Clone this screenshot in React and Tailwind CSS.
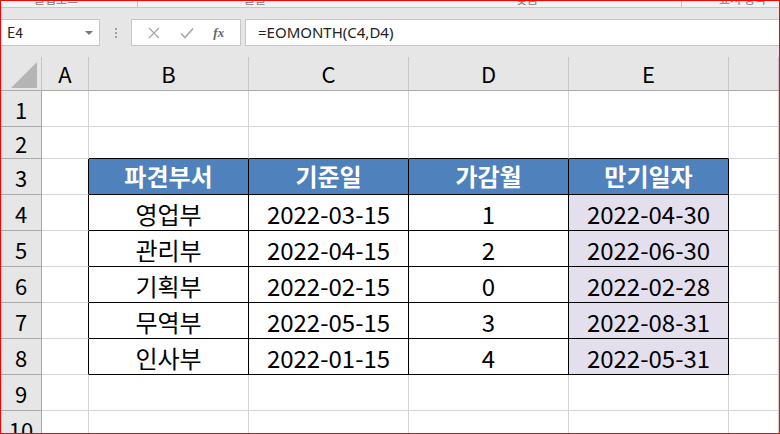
import React from 'react'

const FONT = { fontFamily: '"Noto Sans CJK KR", "Noto Sans", sans-serif' }

const ROW_H = [
  'h-[36px] grid-rows-[36px]', 'h-[32px] grid-rows-[32px]', 'h-[36px] grid-rows-[36px]', 'h-[36px] grid-rows-[36px]',
  'h-[36px] grid-rows-[36px]', 'h-[36px] grid-rows-[36px]', 'h-[36px] grid-rows-[36px]', 'h-[36px] grid-rows-[36px]',
  'h-[36px] grid-rows-[36px]', 'h-[36px] grid-rows-[36px]',
]

const DATA = {
  3: ['파견부서', '기준일', '가감월', '만기일자'],
  4: ['영업부', '2022-03-15', '1', '2022-04-30'],
  5: ['관리부', '2022-04-15', '2', '2022-06-30'],
  6: ['기획부', '2022-02-15', '0', '2022-02-28'],
  7: ['무역부', '2022-05-15', '3', '2022-08-31'],
  8: ['인사부', '2022-01-15', '4', '2022-05-31'],
}

function Cell({ row, col }) {
  const inTable = row >= 3 && row <= 8
  // col: 0 = A, 1..4 = B..E, 5 = F
  if (col >= 1 && col <= 4 && inTable) {
    const text = DATA[row][col - 1]
    if (row === 3) {
      return (
        <div className="min-h-0 overflow-hidden border-r border-b border-[#000] bg-[#4f81bd] text-white font-bold text-[24px] leading-none flex items-center justify-center pb-[2px]">
          {text}
        </div>
      )
    }
    return (
      <div className={`min-h-0 overflow-hidden border-r border-b border-[#000] text-[24px] leading-none text-black flex items-center justify-center pt-[2px] ${col === 4 ? 'bg-[#e4dfec]' : 'bg-white'}`}>
        {text}
      </div>
    )
  }
  if (col === 0 && inTable) {
    return <div className="bg-white border-r border-b border-b-[#d4d4d4] border-r-[#000]" />
  }
  if (row === 2 && col >= 1 && col <= 4) {
    return <div className="bg-white border-r border-b border-r-[#d4d4d4] border-b-[#000]" />
  }
  return <div className="bg-white border-r border-b border-[#d4d4d4]" />
}

export default function App() {
  const rows = [1, 2, 3, 4, 5, 6, 7, 8, 9, 10]
  return (
    <div className="w-[780px] h-[434px] border border-[#ff0000] overflow-hidden bg-[#e6e6e6] flex flex-col" style={FONT}>

      {/* ribbon bottom (group labels cut off) */}
      <div className="h-[7px] shrink-0 bg-[#f3f3f3] border-b border-[#c6c6c6] relative overflow-hidden text-[12px] text-[#777]">
        <span className="absolute left-[33px] top-[-11px]">클립보드</span>
        <span className="absolute left-[126px] top-[-4px] w-[4px] h-[3px] border border-[#888]" />
        <span className="absolute left-[136px] top-0 h-[7px] w-px bg-[#c6c6c6]" />
        <span className="absolute left-[243px] top-[-11px]">글꼴</span>
        <span className="absolute left-[379px] top-[-4px] w-[4px] h-[3px] border border-[#888]" />
        <span className="absolute left-[515px] top-[-11px]">맞춤</span>
        <span className="absolute left-[672px] top-[-4px] w-[4px] h-[3px] border border-[#888]" />
        <span className="absolute left-[680px] top-0 h-[7px] w-px bg-[#c6c6c6]" />
        <span className="absolute left-[718px] top-[-11px]">표시 형식</span>
      </div>

      <div className="h-[11px] shrink-0" />

      {/* formula bar */}
      <div className="h-[27px] shrink-0 flex items-stretch">
        <div className="w-[99px] bg-white border border-l-0 border-[#c6c6c6] flex items-center justify-between pl-[6px] pr-[6px] text-[14px] text-[#222]">
          <span>E4</span>
          <span className="w-0 h-0 border-l-[4px] border-r-[4px] border-t-[4px] border-l-transparent border-r-transparent border-t-[#777]" />
        </div>
        <div className="w-[31px] flex flex-col items-center justify-center gap-[2px]">
          <span className="w-[2px] h-[2px] bg-[#a0a0a0]" />
          <span className="w-[2px] h-[2px] bg-[#a0a0a0]" />
          <span className="w-[2px] h-[2px] bg-[#a0a0a0]" />
        </div>
        <div className="w-[110px] bg-white border border-[#c6c6c6] flex items-center justify-around px-[6px]">
          <svg width="12" height="12" viewBox="0 0 12 12" fill="none" stroke="#a8a8a8" strokeWidth="1.3">
            <path d="M1 1L11 11M11 1L1 11" />
          </svg>
          <svg width="14" height="12" viewBox="0 0 14 12" fill="none" stroke="#a8a8a8" strokeWidth="1.6">
            <path d="M1 6.5L5 10.5L13 1.5" />
          </svg>
          <span className="text-[13px] italic font-bold text-[#666]" style={{ fontFamily: '"Liberation Serif", serif' }}>fx</span>
        </div>
        <div className="w-[4px]" />
        <div className="flex-1 bg-white border border-r-0 border-[#c6c6c6] flex items-center pl-[12px] text-[15px] text-[#222]" style={{ fontFamily: '"Noto Sans", sans-serif' }}>
          =EOMONTH(C4,D4)
        </div>
      </div>

      <div className="h-[11px] shrink-0" />

      {/* column headers */}
      <div className="grid grid-cols-[41px_47px_160px_160px_160px_160px_1fr] h-[34px] shrink-0 border-b border-[#ababab] text-[22px] text-black">
        <div className="border-r border-[#c6c6c6] flex items-end justify-end pr-[4px] pb-[2px]">
          <svg width="26" height="26" viewBox="0 0 26 26">
            <path d="M26 0L26 26L0 26Z" fill="#b4b4b4" />
          </svg>
        </div>
        {['A', 'B', 'C', 'D', 'E', ''].map((c, i) => (
          <div key={i} className="border-r border-[#c6c6c6] flex items-center justify-center">{c}</div>
        ))}
      </div>

      {/* sheet */}
      <div className="flex-1 overflow-hidden">
        {rows.map((r, ri) => (
          <div key={r} className={`grid grid-cols-[41px_47px_160px_160px_160px_160px_1fr] ${ROW_H[ri]}`}>
            <div className="min-h-0 overflow-hidden bg-[#e6e6e6] border-r border-b border-[#ababab] flex items-center justify-center text-[22px] leading-none text-black">{r}</div>
            {[0, 1, 2, 3, 4, 5].map(c => <Cell key={c} row={r} col={c} />)}
          </div>
        ))}
      </div>
    </div>
  )
}
